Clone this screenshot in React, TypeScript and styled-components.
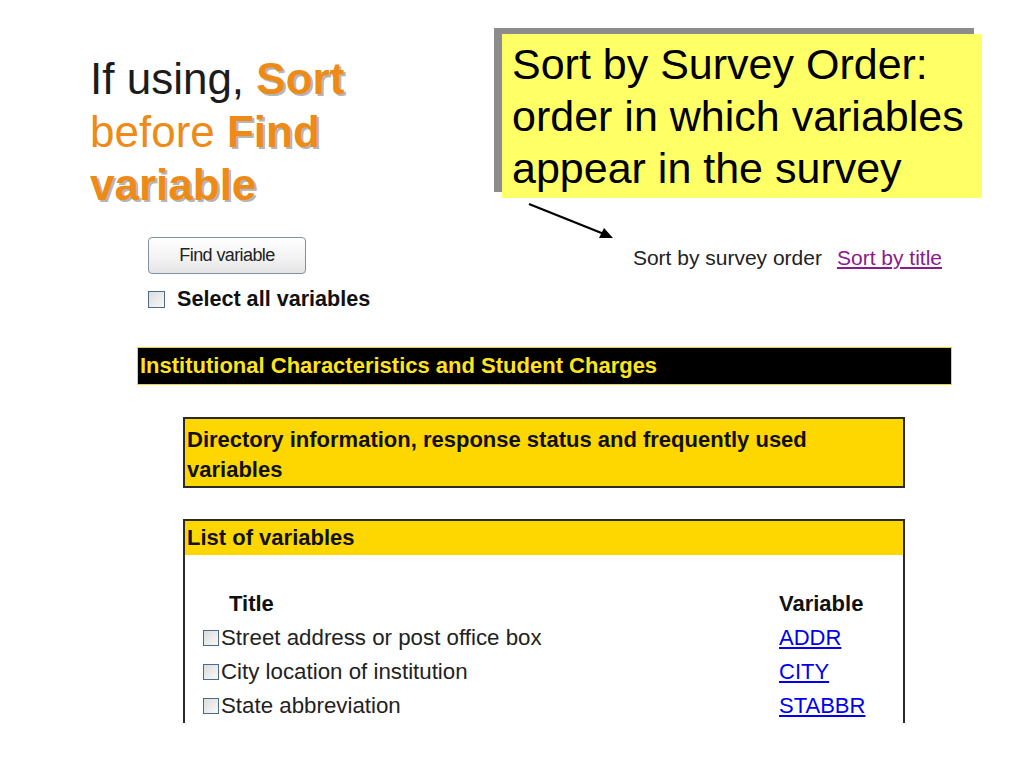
import React from 'react';
import styled, { createGlobalStyle } from 'styled-components';

const GlobalStyle = createGlobalStyle`
    html, body {
        margin: 0;
        padding: 0;
        background: #fff;
    }
`;

const Slide = styled.div`
    position: relative;
    width: 1024px;
    height: 768px;
    overflow: hidden;
    background: #fff;
    font-family: "Liberation Sans", Arial, sans-serif;
`;

const TopRow = styled.div`
    display: flex;
    align-items: flex-start;
`;

const Heading = styled.div`
    margin: 52px 0 0 90px;
    font-size: 44px;
    line-height: 53px;
    color: #1c1c1c;
`;

const Accent = styled.span<{ strong?: boolean }>`
    color: #ee8a16;
    font-weight: ${props => props.strong ? 700 : 400};
    text-shadow: ${props => props.strong ? '2px 2px 0 #b5b5b5' : 'none'};
`;

const Callout = styled.div`
    margin: 34px 42px 0 auto;
    width: 470px;
    height: 160px;
    padding: 4px 0 0 10px;
    background: #ffff66;
    box-shadow: -8px -6px 0 #8c8c8c;
    font-size: 43px;
    line-height: 52px;
    color: #000;
`;

const Arrow = styled.svg`
    position: absolute;
    left: 520px;
    top: 198px;
`;

const WebPart = styled.div`
    margin-top: 26px;
    font-family: "Liberation Sans", Arial, sans-serif;
`;

const ToolRow = styled.div`
    display: flex;
    align-items: flex-start;
    padding-left: 148px;
`;

const LeftTools = styled.div`
    display: flex;
    flex-direction: column;
    gap: 16px;
`;

const FindButton = styled.button`
    width: 158px;
    height: 37px;
    padding: 0;
    border: 1px solid #7e8fa8;
    border-radius: 4px;
    background: linear-gradient(#ffffff, #f2f2f2 60%, #e4e4e4);
    font-family: "Liberation Sans", Arial, sans-serif;
    font-size: 18px;
    letter-spacing: -0.6px;
    color: #222;
`;

const CheckRow = styled.label`
    display: flex;
    align-items: center;
    gap: 12px;
    font-size: 21.6px;
    font-weight: 700;
    color: #111;
    height: 18px;
`;

const Box = styled.span<{ size?: number }>`
    display: inline-block;
    flex: none;
    width: ${props => props.size || 16}px;
    height: ${props => props.size || 16}px;
    box-sizing: border-box;
    border: 1px solid #4d6a8a;
    background: linear-gradient(135deg, #dcdcdc, #f8f8f8);
`;

const SortLinks = styled.div`
    margin: 9px 0 0 auto;
    padding-right: 82px;
    font-size: 21px;
    color: #222;
    display: flex;
    gap: 15px;
`;

const Visited = styled.a`
    color: #8b1a8b;
    text-decoration: underline;
`;

const SectionBar = styled.div`
    margin: 39px 0 0 137px;
    width: 815px;
    height: 38px;
    box-sizing: border-box;
    border: 1px solid #e8d24a;
    background: #000;
    color: #ffe41c;
    font-size: 22px;
    font-weight: 700;
    line-height: 36px;
    padding-left: 2px;
`;

const GoldBox = styled.div`
    margin: 32px 0 0 183px;
    width: 722px;
    box-sizing: border-box;
    border: 2px solid #2a2a2a;
    background: #ffd700;
    font-size: 22px;
    font-weight: 700;
    line-height: 30px;
    color: #111;
    padding: 6px 0 1px 2px;
`;

const ListBox = styled.div`
    margin: 31px 0 0 183px;
    width: 722px;
    height: 204px;
    box-sizing: border-box;
    border: 2px solid #2a2a2a;
    border-bottom: none;
    background: #fff;
`;

const ListHeader = styled.div`
    height: 34px;
    background: #ffd700;
    font-size: 22px;
    font-weight: 700;
    line-height: 34px;
    padding-left: 2px;
    color: #111;
`;

const VarTable = styled.div`
    display: grid;
    grid-template-columns: 1fr 124px;
    padding: 32px 0 0 18px;
`;

const ColHead = styled.div<{ right?: boolean }>`
    font-size: 22px;
    font-weight: 700;
    line-height: 34px;
    color: #111;
    padding-left: ${props => props.right ? '0' : '26px'};
`;

const Cell = styled.div`
    display: flex;
    align-items: center;
    gap: 2px;
    font-size: 22.3px;
    line-height: 34px;
    color: #222;
`;

const VarLink = styled.a`
    font-size: 22px;
    line-height: 34px;
    color: #0000ee;
    text-decoration: underline;
`;

const rows = [
    { title: 'Street address or post office box', name: 'ADDR' },
    { title: 'City location of institution', name: 'CITY' },
    { title: 'State abbreviation', name: 'STABBR' },
];

const App: React.FC = () => (
    <Slide>
        <GlobalStyle />
        <TopRow>
            <Heading>
                If using, <Accent strong>Sort</Accent>
                <br />
                <Accent>before </Accent><Accent strong>Find</Accent>
                <br />
                <Accent strong>variable</Accent>
            </Heading>
            <Callout>
                Sort by Survey Order:
                <br />
                order in which variables
                <br />
                appear in the survey
            </Callout>
        </TopRow>
        <Arrow width="100" height="46" viewBox="0 0 100 46">
            <line x1="9" y1="6" x2="84" y2="36" stroke="#000" strokeWidth="2.4" />
            <polygon points="93,40 79,40 84,30" fill="#000" />
        </Arrow>
        <WebPart>
            <ToolRow>
                <LeftTools>
                    <FindButton>Find variable</FindButton>
                    <CheckRow>
                        <Box size={17} />
                        Select all variables
                    </CheckRow>
                </LeftTools>
                <SortLinks>
                    <span>Sort by survey order</span>
                    <Visited href="#">Sort by title</Visited>
                </SortLinks>
            </ToolRow>
            <SectionBar>Institutional Characteristics and Student Charges</SectionBar>
            <GoldBox>
                Directory information, response status and frequently used
                <br />
                variables
            </GoldBox>
            <ListBox>
                <ListHeader>List of variables</ListHeader>
                <VarTable>
                    <ColHead>Title</ColHead>
                    <ColHead right>Variable</ColHead>
                    {rows.map(r => (
                        <React.Fragment key={r.name}>
                            <Cell>
                                <Box />
                                {r.title}
                            </Cell>
                            <div>
                                <VarLink href="#">{r.name}</VarLink>
                            </div>
                        </React.Fragment>
                    ))}
                </VarTable>
            </ListBox>
        </WebPart>
    </Slide>
);

export default App;
